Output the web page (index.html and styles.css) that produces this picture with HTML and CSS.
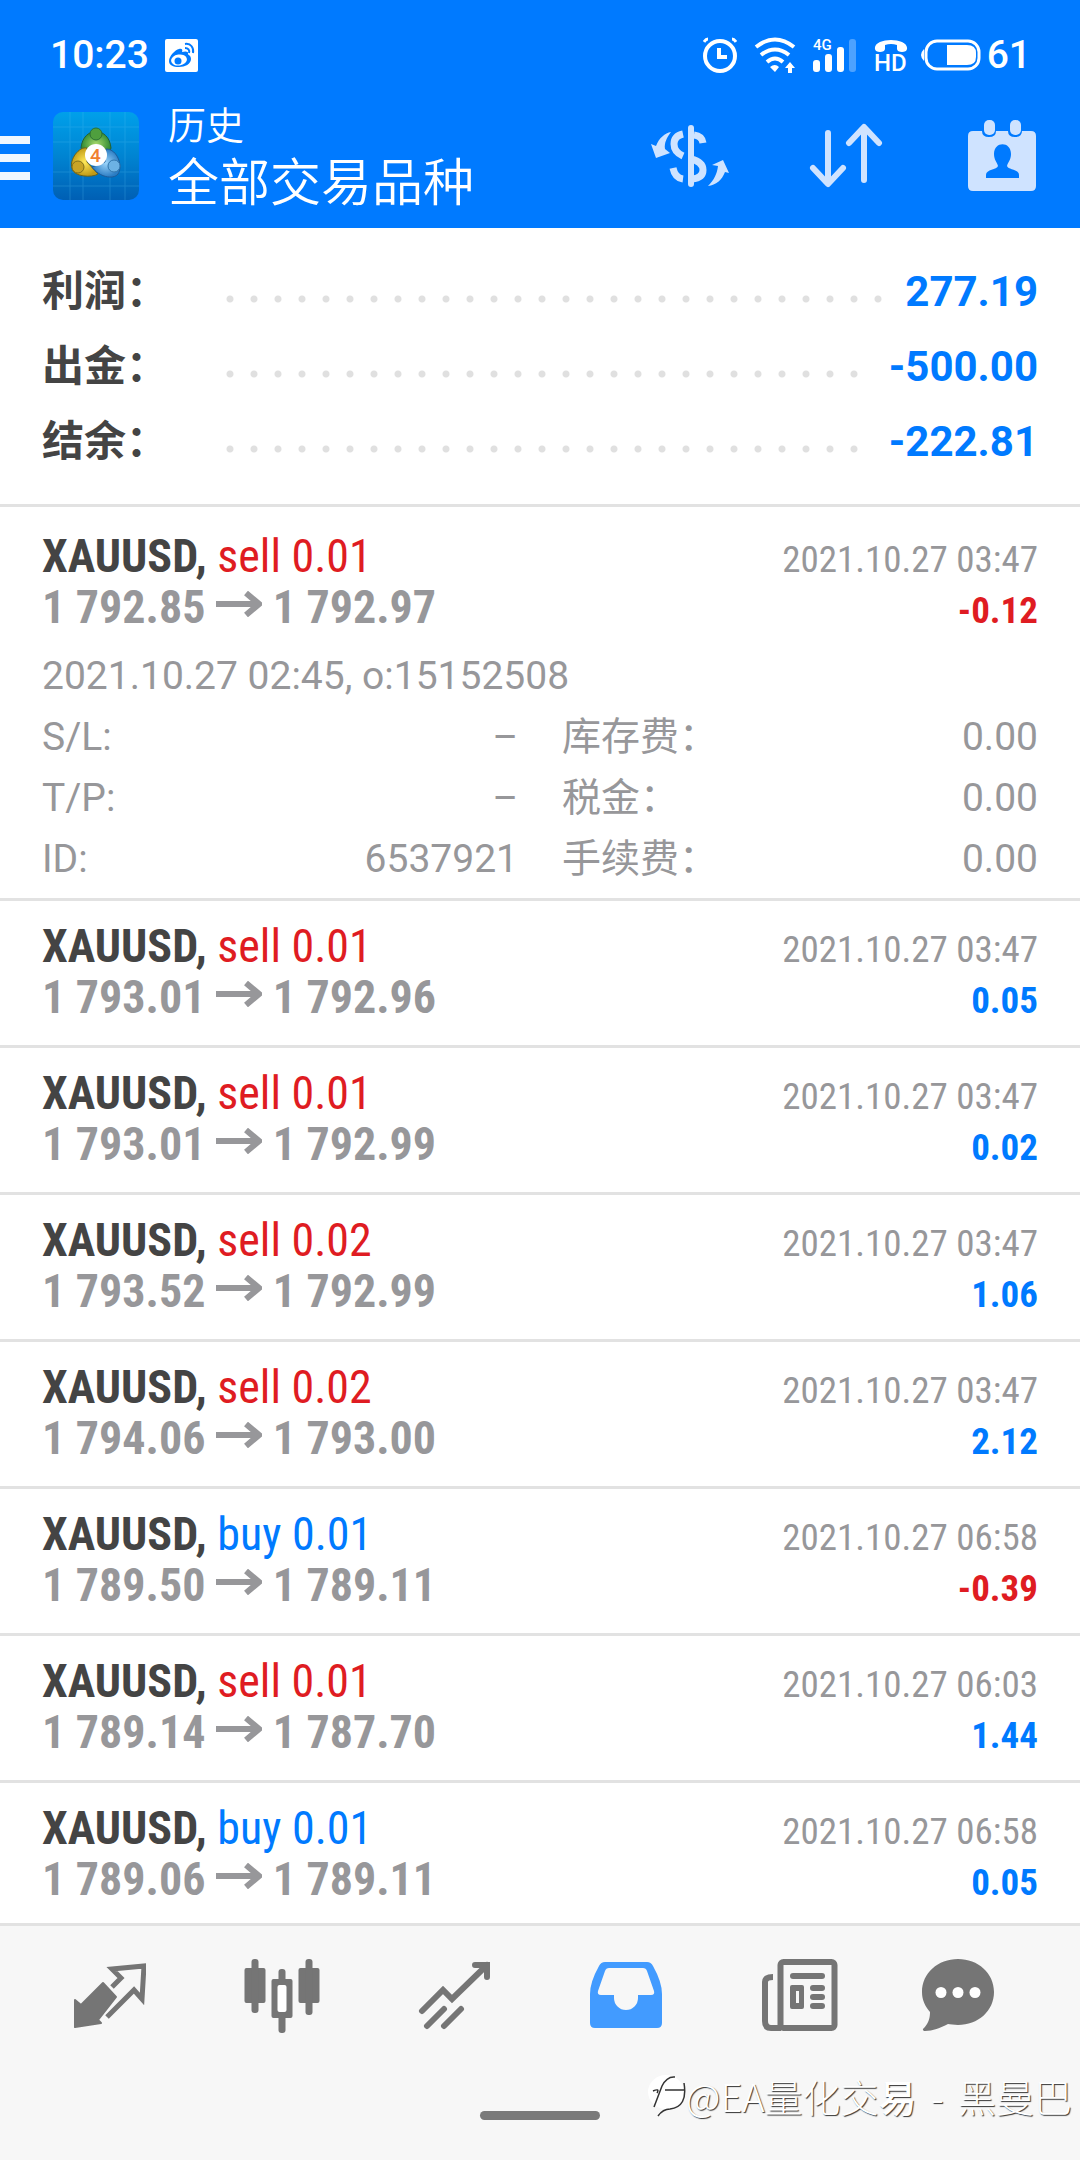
FILE: index.html
```html
<!DOCTYPE html>
<html lang="zh-CN">
<head>
<meta charset="utf-8">
<meta name="viewport" content="width=device-width">
<title>历史</title>
<link rel="stylesheet" href="styles.css">
</head>
<body>
<svg class="defs" aria-hidden="true"><symbol id="arrow" viewBox="0 0 46 26"><path d="M0 13h42M30 2l13 11-13 11" fill="none" stroke="currentColor" stroke-width="6"/></symbol></svg>
<header class="header">
  <div class="status">
    <span>10:23</span>
    <svg class="weibo" width="33" height="33" viewBox="0 0 33 33"><rect width="33" height="33" rx="2" fill="#fff"/><path d="M4 22c0-5 6-11 10-12 3-1 4 1 3 3 3-1 7-1 6 2 0 1 3 1 3 5 0 5-6 8-12 8s-10-2-10-6z" fill="#007aff"/><ellipse cx="14" cy="21" rx="8" ry="5.500" transform="rotate(-8 14 21)" fill="#fff"/><circle cx="13" cy="22" r="3.500" fill="#007aff"/><path d="M20 5c6-1 9 4 8 9M20 9c3 0 5 2 4 5" fill="none" stroke="#007aff" stroke-width="2"/></svg>
    <div class="status-right">
      <svg width="34" height="36" viewBox="0 0 34 36" fill="none" stroke="#fff"><circle cx="17" cy="19" r="15" stroke-width="4"/><path d="M16 11v9h8" stroke-width="4"/><path d="M1 5q2-3 4-3M33 5q-2-3-4-3" stroke-width="3"/></svg>
      <svg width="42" height="36" viewBox="0 0 42 36" fill="none" stroke="#fff" stroke-width="4"><path d="M2 10q19-15 38 0M7 18q14-11 28 0M13 25q8-7 16 0"/><path d="M16 30q5-4 9 0l-4 5zM36 25l5 6h-3v5h-4v-5h-3z" fill="#fff" stroke="none"/></svg>
      <svg width="44" height="36" viewBox="0 0 44 36" fill="#fff"><text class="glyph-4g" x="0" y="13">4G</text><rect x="0" y="23" width="7" height="12" rx="3"/><rect x="12" y="17" width="7" height="18" rx="3"/><rect x="24" y="10" width="7" height="25" rx="3"/><rect x="36" y="2" width="7" height="33" rx="3" opacity=".3"/></svg>
      <svg width="34" height="44" viewBox="0 -4 34 44" fill="#fff"><path d="M1 12C-1 0 35 0 33 12c0 4-10 4-10 0V8q-6-2-12 0v4c0 4-10 4-10 0z"/><text class="glyph-hd" x="0" y="34">HD</text></svg>
      <svg class="battery" width="60" height="32" viewBox="0 0 60 32"><rect x="5" y="2" width="53" height="28" rx="11" fill="none" stroke="#fff" stroke-width="3"/><path d="M3 10q-6 6 0 12z" fill="#fff"/><path d="M26 6h20q9 0 9 8v4q0 8-9 8H26z" fill="#fff"/></svg>
      <span>61</span>
    </div>
  </div>
  <div class="toolbar">
    <button class="menu" aria-label="菜单"><i></i><i></i><i></i></button>
    <svg class="logo" width="86" height="88" viewBox="0 0 86 88">
      <defs>
        <linearGradient id="sky" x1="0" y1="0" x2="0" y2="1"><stop offset="0" stop-color="#00a0ea"/><stop offset=".5" stop-color="#0084d2"/><stop offset="1" stop-color="#005fb4"/></linearGradient>
        <radialGradient id="gg"><stop offset="0" stop-color="#a5d86a"/><stop offset="1" stop-color="#2f8a32"/></radialGradient>
        <radialGradient id="gy"><stop offset="0" stop-color="#ffe95a"/><stop offset="1" stop-color="#c19a15"/></radialGradient>
        <radialGradient id="gb"><stop offset="0" stop-color="#9bd4fa"/><stop offset="1" stop-color="#2b7dc4"/></radialGradient>
      </defs>
      <rect width="86" height="88" rx="10" fill="url(#sky)"/>
      <path d="M0 15h86M0 30h86M0 60h86M0 74h86M17 0v88M30 0v88M57 0v88M72 0v88" stroke="#59c4f4" opacity=".25"/>
      <path d="M28 36C30 14 56 14 58 36l-3 8-22-2z" fill="url(#gg)" stroke="#245f35" stroke-width="1"/>
      <path d="M34 36C26 34 16 48 19 56c1 9 20 10 26 6L34 50z" fill="url(#gy)" stroke="#66621d" stroke-width="1"/>
      <path d="M53 37c12 0 17 18 12 25-5 6-19 3-26-7l13-5z" fill="url(#gb)" stroke="#1f5c99" stroke-width="1"/>
      <circle cx="43" cy="22" r="6" fill="#4f9f3e" stroke="#2c7135"/><circle cx="25" cy="55" r="6" fill="#c8a426" stroke="#80701d"/><circle cx="61" cy="54" r="6" fill="#6cb2e4" stroke="#3277ad"/>
      <circle cx="43" cy="43" r="11" fill="#fff"/><text class="glyph-4" x="37" y="50">4</text>
    </svg>
    <div class="titles"><h1>历史</h1><p>全部交易品种</p></div>
    <button aria-label="货币"><svg width="80" height="64" viewBox="0 0 80 64" fill="none" stroke="#cfe3ff"><path d="M41 4v56" stroke-width="6" stroke-linecap="round"/><path d="M44 11q8 1 9 8M41 35q12 3 12 11t-11 9M23 44q2 10 10 11M33 10q-9 2-9 10t9 12" stroke-width="7" stroke-linecap="butt"/><path d="M21 8C15 9 9 14 6 22L1 20l5 14 14-5-5-4c-1-6 2-12 6-17zM58 62c6-6 9-12 10-20l-6-1 11-5 6 13-4-1c-3 8-9 13-17 14z" fill="#cfe3ff" stroke="none"/></svg></button>
    <button aria-label="排序"><svg width="74" height="66" viewBox="0 0 74 66" fill="none" stroke="#cfe3ff" stroke-width="6" stroke-linecap="round" stroke-linejoin="round"><path d="M19 10v50M4 45l15 16 15-16M55 57V5M40 20L55 4l15 16"/></svg></button>
    <button aria-label="日期"><svg width="68" height="72" viewBox="0 0 68 72"><path d="M5 11h9q0 6 7 6t7-6h12q0 6 7 6t7-6h9q5 0 5 5v50q0 5-5 5H5q-5 0-5-5V16q0-5 5-5z" fill="#cfe3ff"/><rect x="16" y="0" width="11" height="15" rx="5" fill="#cfe3ff"/><rect x="42" y="0" width="11" height="15" rx="5" fill="#cfe3ff"/><path d="M26 34c0-13 17-13 17 0 0 6-3 8-4 12 1 4 12 3 12 9v3H18v-3c0-6 11-5 12-9-1-4-4-6-4-12z" fill="#007aff"/></svg></button>
  </div>
</header>

<main class="content">
  <dl class="summary">
    <div class="sum-row"><dt>利润：</dt><dd>277.19</dd></div>
    <div class="sum-row"><dt>出金：</dt><dd>-500.00</dd></div>
    <div class="sum-row"><dt>结余：</dt><dd>-222.81</dd></div>
  </dl>
  <ul class="deals">
    <li class="deal open">
      <div class="line"><h2>XAUUSD, <span class="sell">sell 0.01</span></h2><time>2021.10.27 03:47</time></div>
      <div class="line"><p class="price">1 792.85 <svg class="to"><use href="#arrow"/></svg> 1 792.97</p><b class="loss">-0.12</b></div>
      <div class="details">
        <p class="wide">2021.10.27 02:45, o:15152508</p>
        <p><span>S/L:</span><span>–</span></p><p><span>库存费：</span><span>0.00</span></p>
        <p><span>T/P:</span><span>–</span></p><p><span>税金：</span><span>0.00</span></p>
        <p><span>ID:</span><span>6537921</span></p><p><span>手续费：</span><span>0.00</span></p>
      </div>
    </li>
    <li class="deal">
      <div class="line"><h2>XAUUSD, <span class="sell">sell 0.01</span></h2><time>2021.10.27 03:47</time></div>
      <div class="line"><p class="price">1 793.01 <svg class="to"><use href="#arrow"/></svg> 1 792.96</p><b>0.05</b></div>
    </li>
    <li class="deal">
      <div class="line"><h2>XAUUSD, <span class="sell">sell 0.01</span></h2><time>2021.10.27 03:47</time></div>
      <div class="line"><p class="price">1 793.01 <svg class="to"><use href="#arrow"/></svg> 1 792.99</p><b>0.02</b></div>
    </li>
    <li class="deal">
      <div class="line"><h2>XAUUSD, <span class="sell">sell 0.02</span></h2><time>2021.10.27 03:47</time></div>
      <div class="line"><p class="price">1 793.52 <svg class="to"><use href="#arrow"/></svg> 1 792.99</p><b>1.06</b></div>
    </li>
    <li class="deal">
      <div class="line"><h2>XAUUSD, <span class="sell">sell 0.02</span></h2><time>2021.10.27 03:47</time></div>
      <div class="line"><p class="price">1 794.06 <svg class="to"><use href="#arrow"/></svg> 1 793.00</p><b>2.12</b></div>
    </li>
    <li class="deal">
      <div class="line"><h2>XAUUSD, <span class="buy">buy 0.01</span></h2><time>2021.10.27 06:58</time></div>
      <div class="line"><p class="price">1 789.50 <svg class="to"><use href="#arrow"/></svg> 1 789.11</p><b class="loss">-0.39</b></div>
    </li>
    <li class="deal">
      <div class="line"><h2>XAUUSD, <span class="sell">sell 0.01</span></h2><time>2021.10.27 06:03</time></div>
      <div class="line"><p class="price">1 789.14 <svg class="to"><use href="#arrow"/></svg> 1 787.70</p><b>1.44</b></div>
    </li>
    <li class="deal">
      <div class="line"><h2>XAUUSD, <span class="buy">buy 0.01</span></h2><time>2021.10.27 06:58</time></div>
      <div class="line"><p class="price">1 789.06 <svg class="to"><use href="#arrow"/></svg> 1 789.11</p><b>0.05</b></div>
    </li>
  </ul>
</main>

<footer class="footer">
  <nav class="tabs">
    <a href="#quotes" aria-label="行情"><svg width="72" height="84" viewBox="0 0 72 84"><path d="M1 45l6 5 22-22 13 14-18 23 3 3-26 4z" fill="#757575" stroke="#757575" stroke-width="2" stroke-linejoin="round"/><path d="M38 32l9-9-9-9 32-3-2 33-8-9-27 27" fill="none" stroke="#757575" stroke-width="5"/></svg></a>
    <a href="#charts" aria-label="图表"><svg width="76" height="84" viewBox="0 0 76 84" fill="#757575"><rect x="0.500" y="13" width="21" height="35" rx="2"/><rect x="7.500" y="4" width="7" height="54" rx="3"/><rect x="54.500" y="13" width="21" height="35" rx="2"/><rect x="61.500" y="4" width="7" height="56" rx="3"/><rect x="27.500" y="24" width="21" height="39" rx="2"/><rect x="34.500" y="14" width="7" height="64" rx="3"/><rect x="33.500" y="30" width="9" height="27" rx="2" fill="#fff"/></svg></a>
    <a href="#trade" aria-label="交易"><svg width="72" height="84" viewBox="0 0 72 84" fill="none" stroke="#757575" stroke-width="6" stroke-linecap="round"><path d="M4 56l21-21 9 9 35-34M57 10h12v12M9 71l17-17M26 71l17-17" stroke-linejoin="miter"/></svg></a>
    <a href="#history" aria-label="历史" aria-current="page"><svg width="72" height="84" viewBox="0 0 72 84"><path fill-rule="evenodd" fill="#429bff" d="M15 7h42q4 0 6 4 9 16 9 28v29q0 5-5 5H5q-5 0-5-5V39Q0 27 9 11q2-4 6-4zm4 6q-3 0-4 3L8 36q-1 4 3 4h13v3a12 12 0 0 0 24 0v-3h13q4 0 3-4l-7-20q-1-3-4-3z"/></svg></a>
    <a href="#news" aria-label="新闻"><svg width="80" height="84" viewBox="-4 0 80 84" fill="none" stroke="#757575" stroke-width="6"><rect x="18.500" y="7" width="54" height="66" rx="3"/><path d="M11 22q-8 0-8 5v39q0 7 6 7h10"/><g fill="#757575" stroke="none"><rect x="28" y="18" width="35" height="6" rx="3"/><path fill-rule="evenodd" d="M30 30h10q2 0 2 2v20q0 2-2 2H30q-2 0-2-2V32q0-2 2-2zm4 6v12h3V36z"/><rect x="48" y="30" width="15" height="6" rx="3"/><rect x="48" y="39" width="15" height="6" rx="3"/><rect x="48" y="48" width="15" height="6" rx="3"/></g></svg></a>
    <a href="#chat" aria-label="聊天"><svg width="96" height="84" viewBox="0 0 96 84"><path d="M36 4c20 0 36 14 36 33S56 70 36 70c-4 0-8-1-10-1-8 4-15 7-23 7-2 0-3-2-1-3 5-5 6-11 6-16C3 51 0 45 0 37 0 18 16 4 36 4z" fill="#757575"/><g fill="#fff"><circle cx="19" cy="37.500" r="5.500"/><circle cx="36" cy="37.500" r="5.500"/><circle cx="53" cy="37.500" r="5.500"/></g></svg></a>
  </nav>
  <div class="home"></div>
  <p class="watermark"><svg width="38" height="46" viewBox="0 0 38 46"><ellipse cx="18" cy="19" rx="18" ry="17" fill="#fff"/><path d="M6 34L14 13Q19 3 27 4M5 18q7-3 4 2M17 17h19M36 10q4 24-14 26-7 0-12 7" fill="none" stroke="#333" stroke-width="1.500"/></svg>@EA量化交<b>易</b><span class="dash"> - </span>黑曼巴</p>
</footer>
</body>
</html>
```
FILE: styles.css
```css
* { box-sizing: border-box; margin: 0; padding: 0; }

body {
  display: flex;
  flex-direction: column;
  height: 100vh;
  background: #fff;
  color: #444;
  font-family: Roboto, "Noto Sans CJK SC", sans-serif;
}

ul { list-style: none; }
svg { flex: none; }
button { border: 0; background: none; }
.defs { position: absolute; width: 0; height: 0; }

.header { flex: none; background: #007aff; color: #fff; }

.status {
  display: flex;
  align-items: center;
  gap: 16px;
  padding: 12px 49px 0 50px;
  line-height: 86px;
  font-size: 39px;
  font-weight: 500;
}
.status-right { display: flex; align-items: center; gap: 17px; margin-left: auto; }
.battery { margin: 0 -11px 0 -4px; }
.glyph-4g { font: 500 15px Roboto, sans-serif; }
.glyph-hd { font: 500 24px Roboto, sans-serif; }
.glyph-4 { font: 500 19px Roboto, sans-serif; fill: #f08030; }

.toolbar { display: flex; align-items: center; padding-bottom: 14px; }
.menu { display: flex; flex-direction: column; gap: 10px; width: 30px; padding-top: 4px; }
.menu i { height: 8px; background: #f0f7ff; }
.logo { margin: 0 29px 0 23px; }
.titles { flex: 1; margin-bottom: -4px; padding-top: 4px; font-weight: 350; }
.titles h1 { font-size: 38px; font-weight: inherit; line-height: 48px; }
.titles p { font-size: 51px; line-height: 68px; }
.toolbar button:not(.menu) { display: grid; place-items: center; width: 156px; height: 100px; }

.content { flex: 1; min-height: 0; overflow-y: auto; scrollbar-width: none; }

.summary { padding: 26px 42px 25px; }
.sum-row { display: flex; font-size: 42px; font-weight: 700; line-height: 75px; }
.sum-row dt { width: 176px; }
.sum-row dd { display: flex; flex: 1; color: #007aff; }
.sum-row dd::before {
  content: "";
  flex: 1;
  margin-right: 20px;
  background: radial-gradient(circle at 12px 45px, #e0e0e0 3px, transparent 4px) 0 0 / 24px 75px repeat-x;
}

.deal { padding: 20px 42px 22px; border-top: 3px solid #e2e2e2; }
.deal.open { padding: 24px 42px 8px; }
.line {
  display: flex;
  align-items: baseline;
  justify-content: space-between;
  height: 51px;
  font-family: "Roboto Condensed", Roboto, sans-serif;
  font-size: 37px;
  line-height: 51px;
}
.line h2 { font-size: 46px; font-weight: 700; }
.line h2 span { font-weight: 400; }
.sell { color: #df1c22; }
.buy { color: #007aff; }
.line time { color: #97979a; }
.line b { color: #007aff; font-weight: 700; }
.line .loss { color: #df1c22; }
.price { color: #97979a; font-size: 46px; font-weight: 700; }
.to { width: 46px; height: 26px; vertical-align: 6px; }

.details {
  display: grid;
  grid-template-columns: 1fr 1fr;
  column-gap: 44px;
  padding-top: 13px;
  color: #97979a;
  font-size: 39px;
  line-height: 61px;
}
.details p { display: flex; justify-content: space-between; }
.details .wide { grid-column: 1 / -1; }

.footer { position: relative; flex: none; border-top: 3px solid #e2e2e2; background: #f7f7f7; padding-bottom: 40px; }
.tabs { display: grid; grid-template-columns: repeat(6, 1fr); padding: 29px 24px 72px; }
.tabs a { display: grid; place-items: center; }
.home { width: 120px; height: 9px; margin: 0 auto; border-radius: 5px; background: #7a7a7a; }
.watermark {
  position: absolute;
  right: 8px;
  bottom: 40px;
  display: flex;
  align-items: center;
  color: #fff;
  font: 300 38px/48px "Noto Sans CJK SC", sans-serif;
  white-space: pre;
  text-shadow: 1px 1px 1px #333;
}
.watermark b { font-weight: 500; }
.dash { padding: 0 6px; }
```
